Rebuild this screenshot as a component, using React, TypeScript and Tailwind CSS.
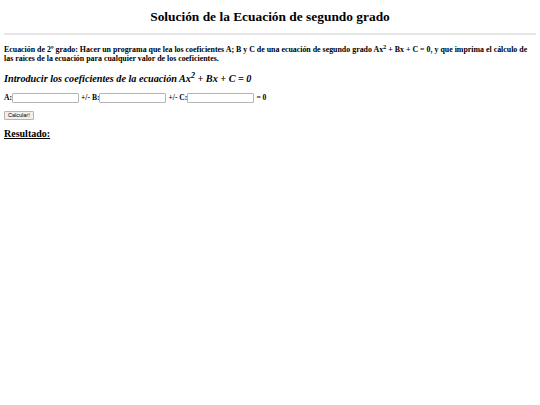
export default function App() {
  return (
    <div className="min-h-[405px] bg-white px-[4px] text-black" style={{ fontFamily: '"Liberation Serif", "Times New Roman", serif' }}>
      <h1 className="pt-[9px] text-center text-[13.4px] font-bold leading-[16px]">Solución de la Ecuación de segundo grado</h1>
      <hr className="mt-[8px] border-t-2 border-[#e5e5e5]" />
      <p className="mt-[10px] pr-[8px] text-[7.9px] font-bold leading-[9px]">
        Ecuación de 2º grado: Hacer un programa que lea los coeficientes A; B y C de una ecuación de segundo grado Ax<sup className="text-[6.5px] leading-none">2</sup> + Bx + C = 0, y que imprima el cálculo de las raices de la ecuación para cualquier valor de los coeficientes.
      </p>
      <h2 className="mt-[9px] text-[10.2px] font-bold italic leading-[13px]">
        Introducir los coeficientes de la ecuación Ax<sup className="text-[8px] leading-none">2</sup> + Bx + C = 0
      </h2>
      <div className="mt-[8px] flex items-center text-[7.6px] font-bold leading-[10px]">
        <span>A:</span>
        <input className="h-[10px] w-[67px] rounded-[1px] border border-[#b5b5b5]" />
        <span className="ml-[2px]">+/- B:</span>
        <input className="h-[10px] w-[67px] rounded-[1px] border border-[#b5b5b5]" />
        <span className="ml-[2px]">+/- C:</span>
        <input className="h-[10px] w-[67px] rounded-[1px] border border-[#b5b5b5]" />
        <span className="ml-[2px]">= 0</span>
      </div>
      <button className="mt-[8px] flex h-[9px] items-center rounded-[1px] border border-[#b5b5b5] bg-[#efefef] px-[3px] text-[5.5px] leading-[5px]" style={{ fontFamily: '"Liberation Sans", Arial, sans-serif' }}>
        Calcular!
      </button>
      <h3 className="mt-[8px] text-[10px] font-bold leading-[12px] underline">Resultado:</h3>
    </div>
  );
}
